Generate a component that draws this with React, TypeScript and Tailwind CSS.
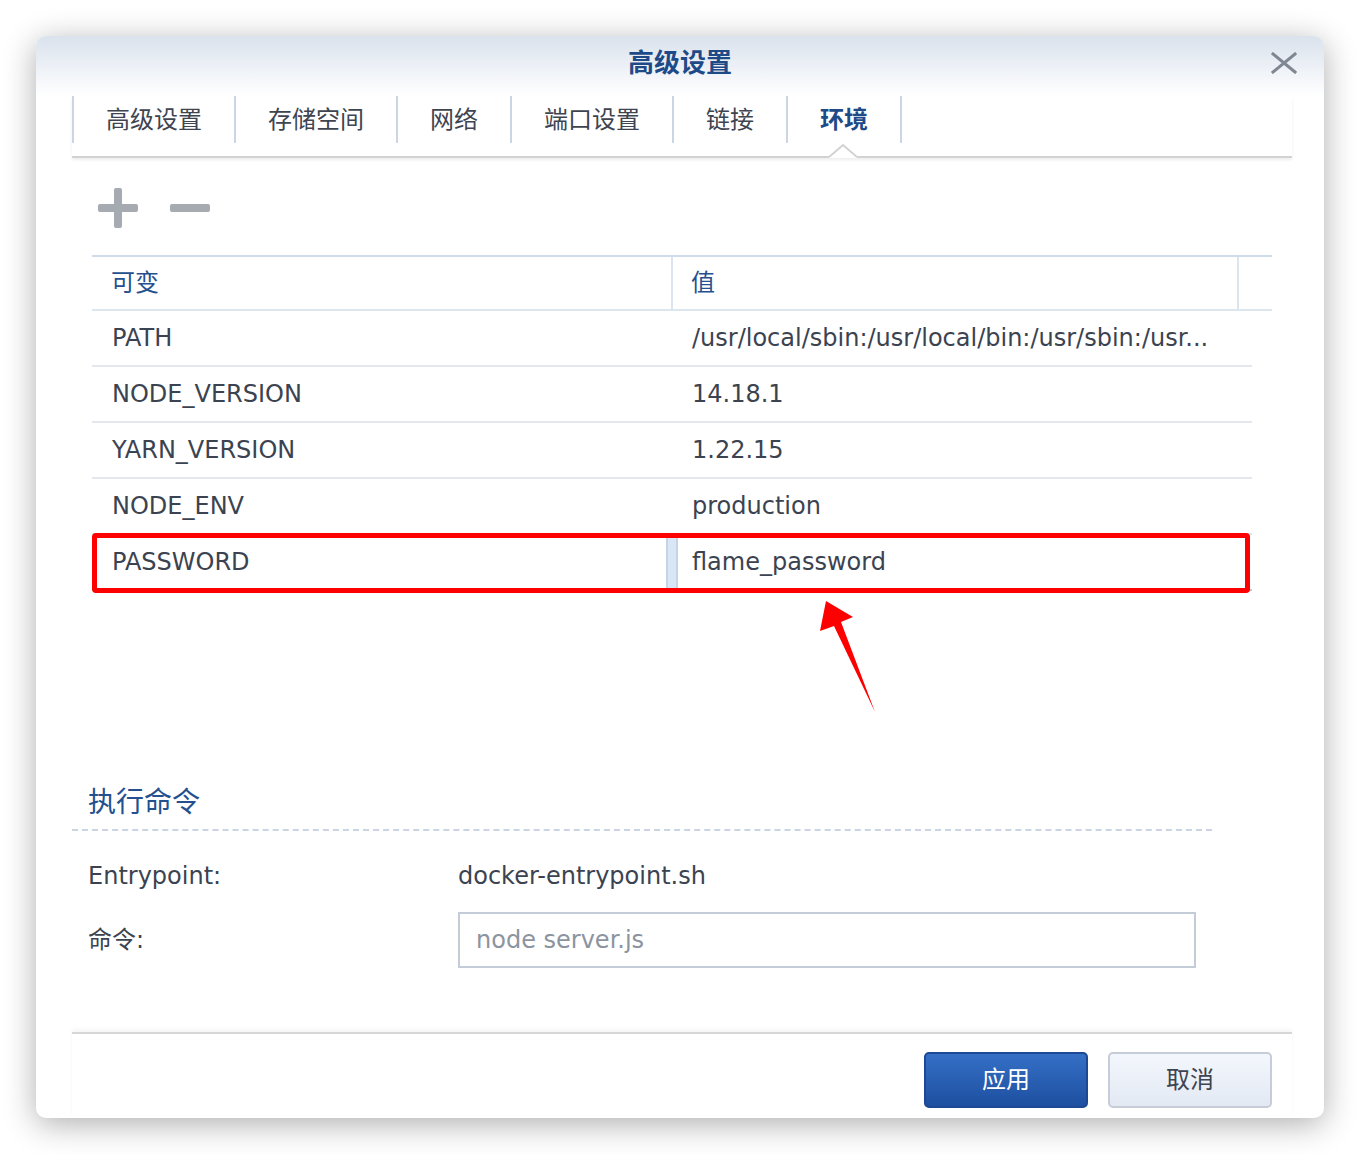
const font = {
  fontFamily: '"DejaVu Sans", "Noto Sans CJK SC", sans-serif',
};

const tabs = ["高级设置", "存储空间", "网络", "端口设置", "链接", "环境"];

const rows = [
  { name: "PATH", value: "/usr/local/sbin:/usr/local/bin:/usr/sbin:/usr..." },
  { name: "NODE_VERSION", value: "14.18.1" },
  { name: "YARN_VERSION", value: "1.22.15" },
  { name: "NODE_ENV", value: "production" },
];

function CloseIcon() {
  return (
    <svg width="26" height="22" viewBox="0 0 26 22">
      <path
        d="M2 2 L24 20 M24 2 L2 20"
        stroke="#7f8792"
        strokeWidth="3"
        strokeLinecap="square"
      />
    </svg>
  );
}

function PlusIcon() {
  return (
    <svg width="40" height="40" viewBox="0 0 40 40">
      <rect x="0" y="16" width="40" height="8" rx="2" fill="#a6aab1" />
      <rect x="16" y="0" width="8" height="40" rx="2" fill="#a6aab1" />
    </svg>
  );
}

function MinusIcon() {
  return (
    <svg width="40" height="40" viewBox="0 0 40 40">
      <rect x="0" y="16" width="40" height="8" rx="2" fill="#a6aab1" />
    </svg>
  );
}

export default function App() {
  return (
    <div className="min-h-screen bg-white pt-[36px] pl-[36px]" style={font}>
      <div className="relative flex h-[1082px] w-[1288px] flex-col overflow-hidden rounded-[10px] bg-white shadow-[0_6px_32px_rgba(0,0,0,0.32)]">
        {/* title bar */}
        <div className="relative flex h-[60px] items-center justify-center bg-gradient-to-b from-[#dae2ed] to-white pb-[6px]">
          <span className="text-[26px] font-bold text-[#1f4a88]">高级设置</span>
          <div className="absolute top-[16px] right-[27px]">
            <CloseIcon />
          </div>
        </div>

        {/* tabs */}
        <div className="relative mr-[32px] ml-[36px] flex h-[62px] items-start border-b-2 border-[#d2d2d2] shadow-[0_2px_3px_rgba(0,0,0,0.07)]">
          {tabs.map((tab, i) => (
            <div
              key={tab}
              className={`flex h-[47px] items-center border-l-2 border-[#cad6e6] px-[32px] text-[24px] ${
                i === tabs.length - 1
                  ? "border-r-2 font-bold text-[#1f4a88]"
                  : "text-[#3e4450]"
              }`}
            >
              {tab}
            </div>
          ))}
          <svg
            className="absolute bottom-[-2px] left-[757px]"
            width="28"
            height="15"
            viewBox="0 0 28 15"
          >
            <polygon points="0,13 14,1 28,13 28,15 0,15" fill="white" />
            <path d="M0 14 L14 2 L28 14" stroke="#d2d2d2" strokeWidth="2" fill="none" />
          </svg>
        </div>

        {/* toolbar */}
        <div className="flex h-[97px] items-start gap-[32px] pt-[30px] pl-[62px]">
          <PlusIcon />
          <MinusIcon />
        </div>

        {/* table */}
        <div className="relative ml-[56px] h-[530px] w-[1180px]">
          <div className="flex h-[56px] border-y-2 border-t-[#cfdbe9] border-b-[#dde5ee] text-[24px] text-[#25508f]">
            <div className="flex w-[581px] items-center border-r-2 border-[#dbe4ef] pl-[19px]">可变</div>
            <div className="flex w-[566px] items-center border-r-2 border-[#dbe4ef] pl-[18px]">值</div>
            <div className="flex-1" />
          </div>
          {rows.map((row) => (
            <div
              key={row.name}
              className="flex h-[56px] w-[1160px] items-center border-b-2 border-[#e3e8ef] text-[24px] text-[#3b4350]"
            >
              <div className="w-[581px] pl-[20px]">{row.name}</div>
              <div className="min-w-0 flex-1 truncate pr-[12px] pl-[19px]">{row.value}</div>
            </div>
          ))}
          <div className="flex h-[56px] w-[1160px] border-b-2 border-[#c3c8cf] text-[24px] text-[#3b4350]">
            <div className="flex w-[574px] items-center pl-[20px]">PASSWORD</div>
            <div className="w-[12px] border-x-2 border-[#c5d4e7] bg-[#d9e6f6]" />
            <div className="flex flex-1 items-center pl-[14px]">flame_password</div>
          </div>

          {/* annotation */}
          <div className="absolute top-[278px] left-0 h-[60px] w-[1158px] rounded-[4px] border-[5px] border-[#ff0000]" />
          <svg
            className="absolute top-[340px] left-[718px]"
            width="70"
            height="120"
            viewBox="0 0 70 120"
          >
            <polygon points="16,6 43,22 31,27 65,117 24,31 10,36" fill="#ff0000" />
          </svg>
        </div>

        {/* execute command */}
        <div className="mr-[112px] ml-[36px] h-[46px] border-b-2 border-dashed border-[#c9d5e3] pl-[16px]">
          <span className="text-[28px] leading-[36px] text-[#24508f]">执行命令</span>
        </div>
        <div className="mt-[21px] ml-[52px] flex h-[48px] items-center text-[24px] text-[#3b4350]">
          <div className="w-[370px]">Entrypoint:</div>
          <div>docker-entrypoint.sh</div>
        </div>
        <div className="mt-[12px] ml-[52px] flex h-[56px] items-center text-[24px] text-[#3b4350]">
          <div className="w-[370px]">命令:</div>
          <input
            className="h-[56px] w-[738px] border-2 border-[#c3ccd7] pl-[16px] text-[24px] outline-none placeholder:text-[#8b949f]"
            placeholder="node server.js"
            style={font}
          />
        </div>

        {/* footer */}
        <div className="mt-auto mr-[32px] ml-[36px] flex h-[86px] justify-end gap-[20px] border-t-2 border-[#d6d6d6] pt-[18px] pr-[20px] shadow-[0_-3px_4px_rgba(0,0,0,0.04)]">
          <button className="h-[56px] w-[164px] rounded-[5px] border-2 border-[#1d4894] bg-gradient-to-b from-[#3470c6] to-[#1e4fa0] text-[24px] text-white">
            应用
          </button>
          <button className="h-[56px] w-[164px] rounded-[5px] border-2 border-[#c6cdd8] bg-gradient-to-b from-[#f3f7fd] to-[#e3e9f3] text-[24px] text-[#3e4450]">
            取消
          </button>
        </div>
      </div>
    </div>
  );
}
